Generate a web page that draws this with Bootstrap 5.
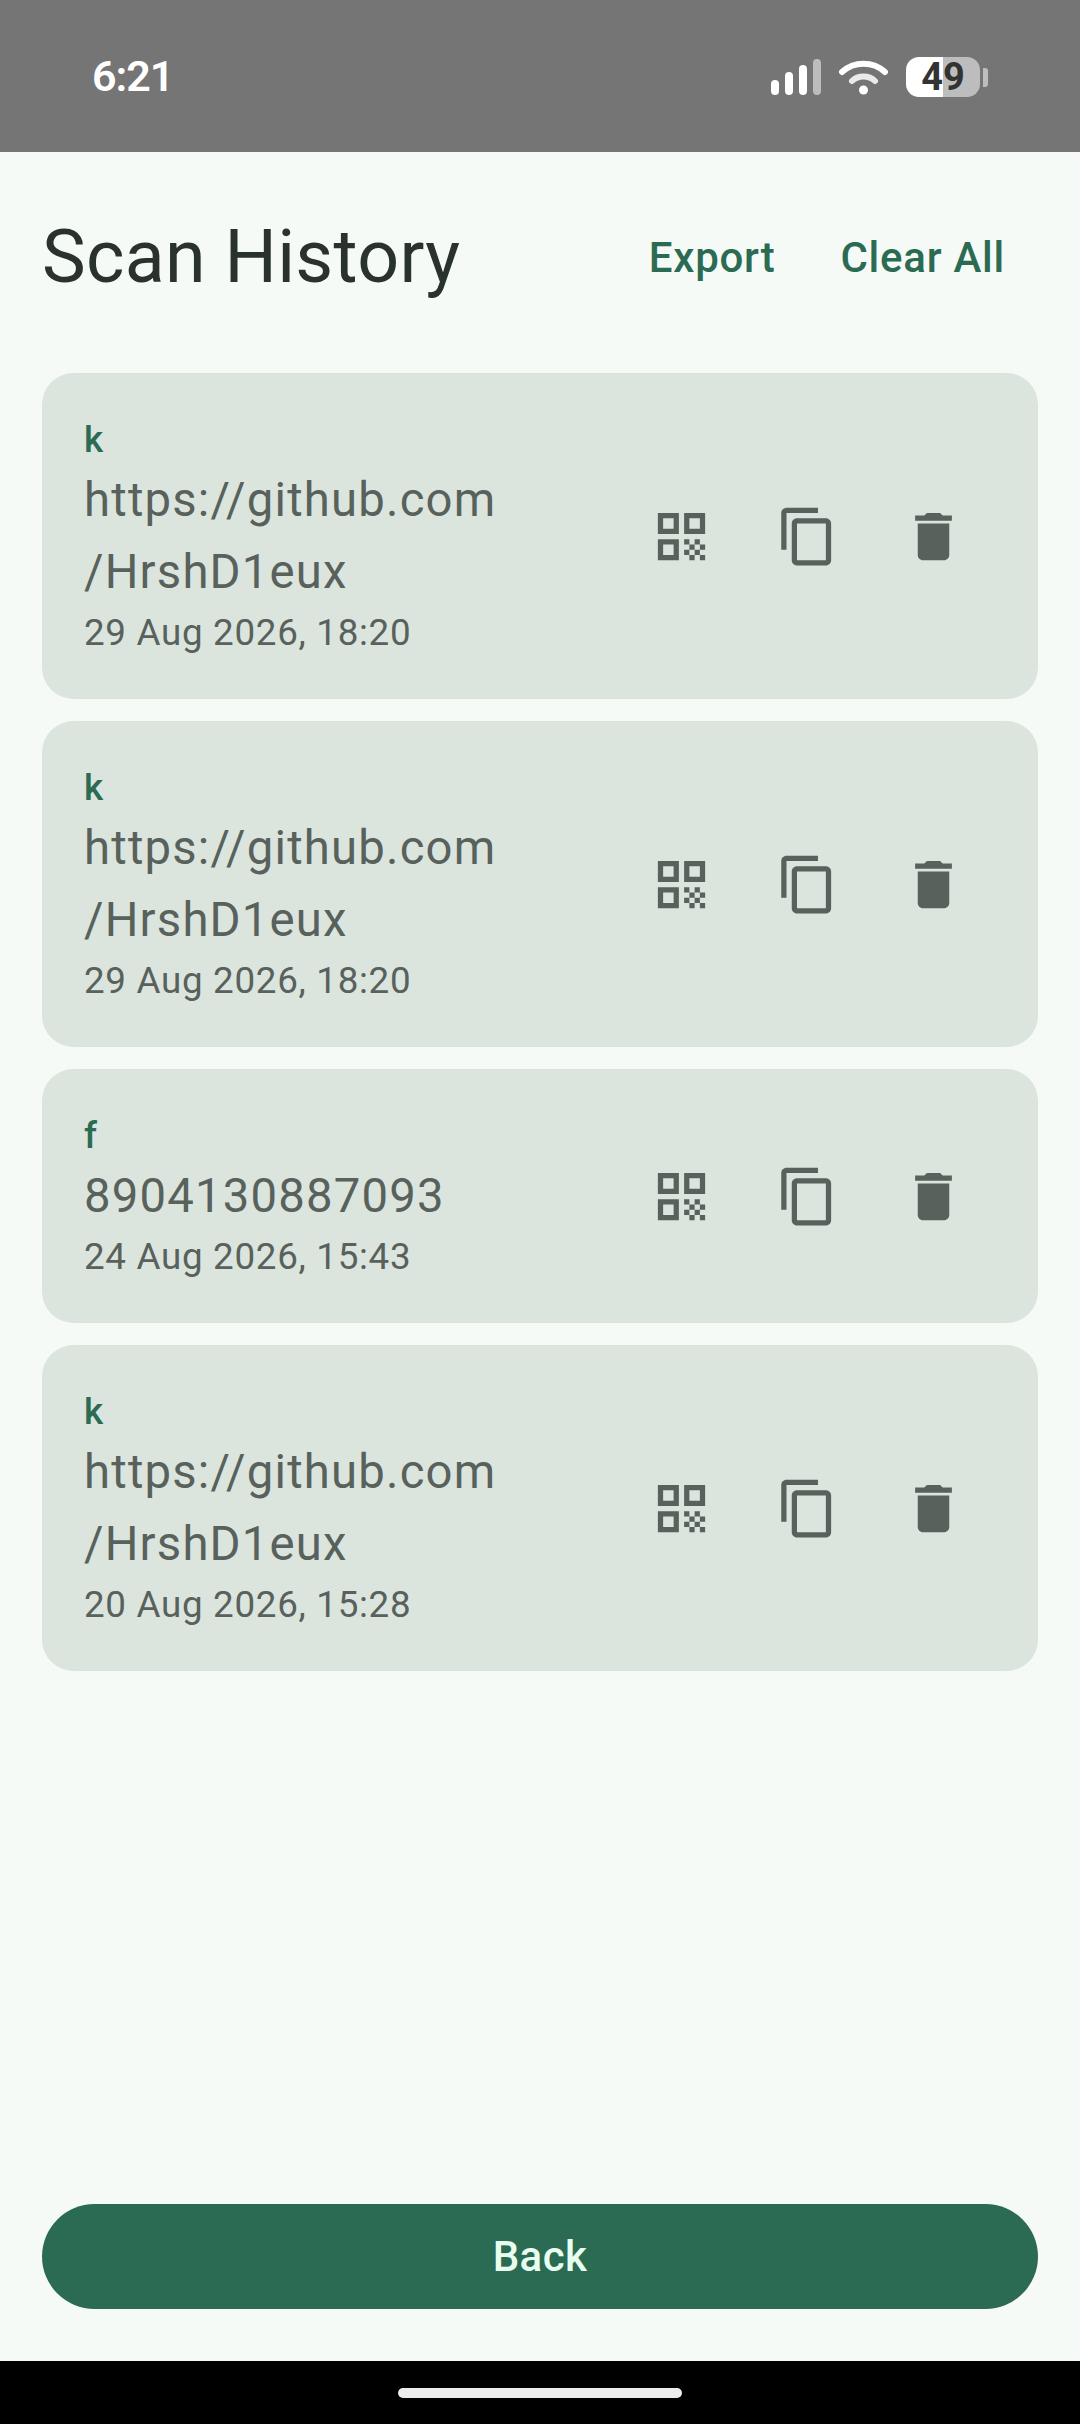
<!DOCTYPE html>
<html lang="en">
<head>
<meta charset="utf-8">
<title>Scan History</title>
<link href="https://cdn.jsdelivr.net/npm/bootstrap@5.3.0/dist/css/bootstrap.min.css" rel="stylesheet">
<style>
html, body { height: 100%; }
body { margin: 0; background: #f5faf6; font-family: Roboto, "Liberation Sans", sans-serif; }
.phone-page { width: 1080px; height: 2424px; }
.status-strip { height: 152px; background: #757575; padding: 0 92px; flex: none; }
.status-time { color: #fff; font-size: 43px; font-weight: 600; line-height: 1; margin-top: 55px; letter-spacing: -1px; }
.status-icons { margin-top: 57px; height: 40px; gap: 18px; }
.batt-wrap { display: flex; align-items: center; }
.batt-body { width: 74px; height: 40px; border-radius: 13px; background: linear-gradient(to right, #fff 50%, #bdbdbd 50%); color: #333; font-size: 38px; font-weight: 700; line-height: 40px; text-align: center; }
.batt-nub { width: 5px; height: 19px; margin-left: 3px; background: #bdbdbd; border-radius: 0 3px 3px 0; }
.main-area { padding: 0 42px 52px; min-height: 0; }
.head-row { height: 221px; padding-bottom: 10px; flex: none; }
.page-title { font-size: 73.5px; font-weight: 400; color: #2a322d; margin: 0; line-height: 1; letter-spacing: .3px; }
.head-actions { margin-right: 33px; gap: 65px; }
.head-link { color: #2c6b53; font-size: 42px; font-weight: 500; letter-spacing: .75px; background: none; border: 0; padding: 0; line-height: 1; }
.scan-stack { gap: 22px; }
.scan-item { background: #dbe5de; border-radius: 31.5px; padding: 42px; }
.scan-label { color: #2c6b53; font-size: 36.75px; font-weight: 500; line-height: 49px; }
.scan-value { color: #58615b; font-size: 47.25px; line-height: 72px; letter-spacing: 1.2px; width: 440px; word-break: break-all; }
.scan-date { color: #58615b; font-size: 36.75px; line-height: 49px; letter-spacing: .7px; }
.icon-slot { width: 126px; height: 126px; background: none; border: 0; padding: 0; flex: none; }
.icon-slot svg { width: 63px; height: 63px; fill: #58615b; display: block; }
.back-btn { height: 105px; border-radius: 52.5px; background: #2c6b53; color: #e8fff0; font-size: 42px; font-weight: 500; border: 0; width: 100%; letter-spacing: .4px; }
.nav-strip { height: 63px; background: #000; flex: none; }
.nav-pill { width: 284px; height: 10px; border-radius: 5px; background: #ececec; margin-top: 27px; }
</style>
</head>
<body>
<div class="phone-page d-flex flex-column">
  <div class="status-strip d-flex justify-content-between align-items-start">
    <div class="status-time">6:21</div>
    <div class="status-icons d-flex align-items-center">
      <svg width="50" height="36" viewBox="0 0 50 36"><rect x="0" y="21" width="8" height="15" rx="4" fill="#fff"/><rect x="14" y="13" width="8" height="23" rx="4" fill="#fff"/><rect x="28" y="6" width="8" height="30" rx="4" fill="#fff"/><rect x="42" y="0" width="8" height="36" rx="4" fill="#bdbdbd"/></svg>
      <svg width="49" height="36" viewBox="0 0 49 36"><path d="M3 13C15 2 34 2 46 13" fill="none" stroke="#fff" stroke-width="6" stroke-linecap="round"/><path d="M13 22C19 16 30 16 36 22" fill="none" stroke="#fff" stroke-width="6" stroke-linecap="round" opacity=".85"/><circle cx="24.5" cy="31" r="4.5" fill="#fff"/></svg>
      <div class="batt-wrap"><div class="batt-body">49</div><div class="batt-nub"></div></div>
    </div>
  </div>
  <main class="main-area flex-grow-1 d-flex flex-column">
    <div class="head-row d-flex justify-content-between align-items-center">
      <h1 class="page-title">Scan History</h1>
      <div class="head-actions d-flex align-items-center">
        <button class="head-link" type="button">Export</button>
        <button class="head-link" type="button">Clear All</button>
      </div>
    </div>
    <div class="scan-stack d-flex flex-column">
      <div class="scan-item d-flex align-items-center">
        <div class="flex-grow-1">
          <div class="scan-label">k</div>
          <div class="scan-value">https://github.com /HrshD1eux</div>
          <div class="scan-date">29 Aug 2026, 18:20</div>
        </div>
        <button class="icon-slot d-flex align-items-center justify-content-center" type="button" aria-label="QR code"><svg viewBox="0 0 24 24"><path d="M3 11h8V3H3v8zm2-6h4v4H5V5zM3 21h8v-8H3v8zm2-6h4v4H5v-4zM13 3v8h8V3h-8zm6 6h-4V5h4v4zM19 19h2v2h-2zM13 13h2v2h-2zM15 15h2v2h-2zM13 17h2v2h-2zM15 19h2v2h-2zM17 17h2v2h-2zM17 13h2v2h-2zM19 15h2v2h-2z"/></svg></button>
        <button class="icon-slot d-flex align-items-center justify-content-center" type="button" aria-label="Copy"><svg viewBox="0 0 24 24"><path d="M16 1H4c-1.1 0-2 .9-2 2v14h2V3h12V1zm3 4H8c-1.1 0-2 .9-2 2v14c0 1.1.9 2 2 2h11c1.1 0 2-.9 2-2V7c0-1.1-.9-2-2-2zm0 16H8V7h11v14z"/></svg></button>
        <button class="icon-slot d-flex align-items-center justify-content-center" type="button" aria-label="Delete"><svg viewBox="0 0 24 24"><path d="M6 19c0 1.1.9 2 2 2h8c1.1 0 2-.9 2-2V7H6v12zM19 4h-3.5l-1-1h-5l-1 1H5v2h14V4z"/></svg></button>
      </div>
      <div class="scan-item d-flex align-items-center">
        <div class="flex-grow-1">
          <div class="scan-label">k</div>
          <div class="scan-value">https://github.com /HrshD1eux</div>
          <div class="scan-date">29 Aug 2026, 18:20</div>
        </div>
        <button class="icon-slot d-flex align-items-center justify-content-center" type="button" aria-label="QR code"><svg viewBox="0 0 24 24"><path d="M3 11h8V3H3v8zm2-6h4v4H5V5zM3 21h8v-8H3v8zm2-6h4v4H5v-4zM13 3v8h8V3h-8zm6 6h-4V5h4v4zM19 19h2v2h-2zM13 13h2v2h-2zM15 15h2v2h-2zM13 17h2v2h-2zM15 19h2v2h-2zM17 17h2v2h-2zM17 13h2v2h-2zM19 15h2v2h-2z"/></svg></button>
        <button class="icon-slot d-flex align-items-center justify-content-center" type="button" aria-label="Copy"><svg viewBox="0 0 24 24"><path d="M16 1H4c-1.1 0-2 .9-2 2v14h2V3h12V1zm3 4H8c-1.1 0-2 .9-2 2v14c0 1.1.9 2 2 2h11c1.1 0 2-.9 2-2V7c0-1.1-.9-2-2-2zm0 16H8V7h11v14z"/></svg></button>
        <button class="icon-slot d-flex align-items-center justify-content-center" type="button" aria-label="Delete"><svg viewBox="0 0 24 24"><path d="M6 19c0 1.1.9 2 2 2h8c1.1 0 2-.9 2-2V7H6v12zM19 4h-3.5l-1-1h-5l-1 1H5v2h14V4z"/></svg></button>
      </div>
      <div class="scan-item d-flex align-items-center">
        <div class="flex-grow-1">
          <div class="scan-label">f</div>
          <div class="scan-value">8904130887093</div>
          <div class="scan-date">24 Aug 2026, 15:43</div>
        </div>
        <button class="icon-slot d-flex align-items-center justify-content-center" type="button" aria-label="QR code"><svg viewBox="0 0 24 24"><path d="M3 11h8V3H3v8zm2-6h4v4H5V5zM3 21h8v-8H3v8zm2-6h4v4H5v-4zM13 3v8h8V3h-8zm6 6h-4V5h4v4zM19 19h2v2h-2zM13 13h2v2h-2zM15 15h2v2h-2zM13 17h2v2h-2zM15 19h2v2h-2zM17 17h2v2h-2zM17 13h2v2h-2zM19 15h2v2h-2z"/></svg></button>
        <button class="icon-slot d-flex align-items-center justify-content-center" type="button" aria-label="Copy"><svg viewBox="0 0 24 24"><path d="M16 1H4c-1.1 0-2 .9-2 2v14h2V3h12V1zm3 4H8c-1.1 0-2 .9-2 2v14c0 1.1.9 2 2 2h11c1.1 0 2-.9 2-2V7c0-1.1-.9-2-2-2zm0 16H8V7h11v14z"/></svg></button>
        <button class="icon-slot d-flex align-items-center justify-content-center" type="button" aria-label="Delete"><svg viewBox="0 0 24 24"><path d="M6 19c0 1.1.9 2 2 2h8c1.1 0 2-.9 2-2V7H6v12zM19 4h-3.5l-1-1h-5l-1 1H5v2h14V4z"/></svg></button>
      </div>
      <div class="scan-item d-flex align-items-center">
        <div class="flex-grow-1">
          <div class="scan-label">k</div>
          <div class="scan-value">https://github.com /HrshD1eux</div>
          <div class="scan-date">20 Aug 2026, 15:28</div>
        </div>
        <button class="icon-slot d-flex align-items-center justify-content-center" type="button" aria-label="QR code"><svg viewBox="0 0 24 24"><path d="M3 11h8V3H3v8zm2-6h4v4H5V5zM3 21h8v-8H3v8zm2-6h4v4H5v-4zM13 3v8h8V3h-8zm6 6h-4V5h4v4zM19 19h2v2h-2zM13 13h2v2h-2zM15 15h2v2h-2zM13 17h2v2h-2zM15 19h2v2h-2zM17 17h2v2h-2zM17 13h2v2h-2zM19 15h2v2h-2z"/></svg></button>
        <button class="icon-slot d-flex align-items-center justify-content-center" type="button" aria-label="Copy"><svg viewBox="0 0 24 24"><path d="M16 1H4c-1.1 0-2 .9-2 2v14h2V3h12V1zm3 4H8c-1.1 0-2 .9-2 2v14c0 1.1.9 2 2 2h11c1.1 0 2-.9 2-2V7c0-1.1-.9-2-2-2zm0 16H8V7h11v14z"/></svg></button>
        <button class="icon-slot d-flex align-items-center justify-content-center" type="button" aria-label="Delete"><svg viewBox="0 0 24 24"><path d="M6 19c0 1.1.9 2 2 2h8c1.1 0 2-.9 2-2V7H6v12zM19 4h-3.5l-1-1h-5l-1 1H5v2h14V4z"/></svg></button>
      </div>
    </div>
    <div class="mt-auto">
      <button class="back-btn" type="button">Back</button>
    </div>
  </main>
  <div class="nav-strip d-flex justify-content-center">
    <div class="nav-pill"></div>
  </div>
</div>
<script src="https://cdn.jsdelivr.net/npm/bootstrap@5.3.0/dist/js/bootstrap.bundle.min.js"></script>
</body>
</html>
